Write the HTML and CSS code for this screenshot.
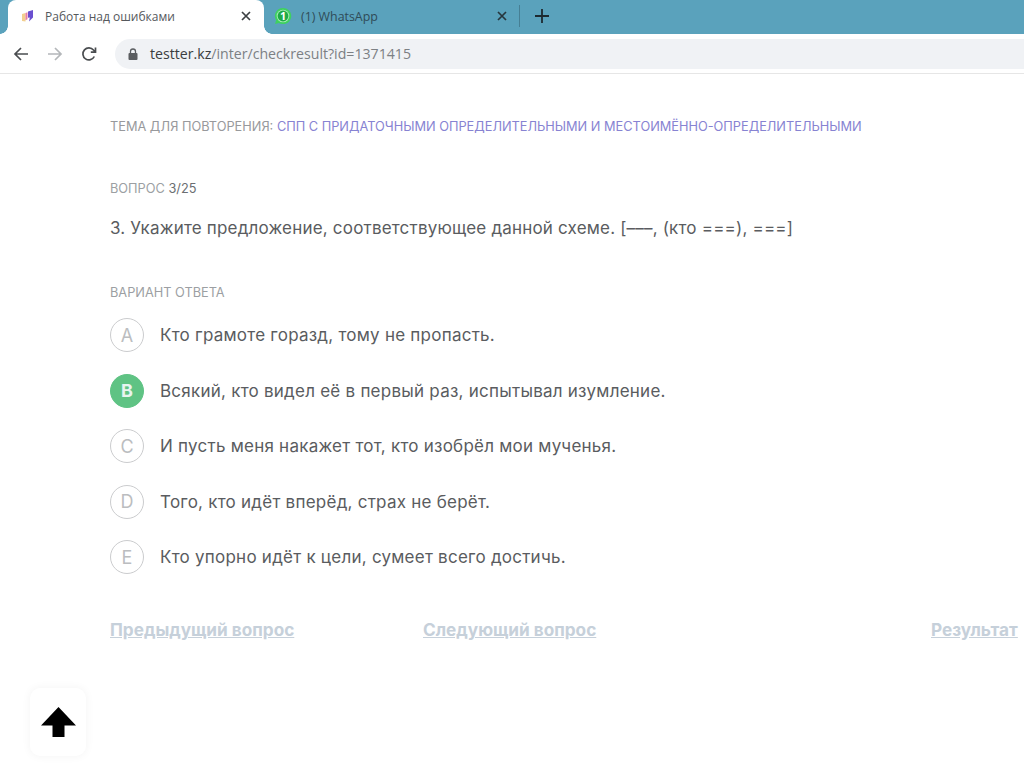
FILE: index.html
```html
<!DOCTYPE html>
<html lang="ru">
<head>
<meta charset="utf-8">
<title>Работа над ошибками</title>
<link rel="stylesheet" href="styles.css">
</head>
<body>
<div class="tabbar">
  <div class="tab active">
    <svg class="favicon" viewBox="0 0 14 14" width="14" height="14"><path d="M1 5l3.500-1v8.500L1 12z" fill="#f2cf8f"/><path d="M4.500 4l2-.8v7l-2 1z" fill="#e77fa6"/><path d="M7 2.500L12 1v7.500L8 12.500l.8-4-1.800.2z" fill="#6a4fd0"/></svg>
    <span class="tab-title">Работа над ошибками</span>
    <svg class="tab-close" viewBox="0 0 10 10" width="10" height="10"><path d="M1 1l8 8M9 1l-8 8" stroke="#3c4043" stroke-width="1.700" fill="none"/></svg>
  </div>
  <div class="tab inactive">
    <svg class="favicon-wa" viewBox="0 0 20 20" width="18" height="18"><path d="M10 1a9 9 0 0 0-7.700 13.600L1.200 18.800l4.300-1.100A9 9 0 1 0 10 1z" fill="#3fd15f"/><circle cx="10" cy="10" r="7" fill="#a8ecb8"/><circle cx="10" cy="10" r="6" fill="#1faa48"/><text x="10" y="14" class="wa-num">1</text></svg>
    <span class="tab-title">(1) WhatsApp</span>
    <svg class="tab-close" viewBox="0 0 10 10" width="10" height="10"><path d="M1 1l8 8M9 1l-8 8" stroke="#26363d" stroke-width="1.700" fill="none"/></svg>
  </div>
  <span class="tab-sep"></span>
  <svg class="new-tab" viewBox="0 0 14 14" width="14" height="14"><path d="M7 0v14M0 7h14" stroke="#1d2a30" stroke-width="1.800" fill="none"/></svg>
</div>
<div class="toolbar">
  <svg class="nav" viewBox="0 0 16 16" width="16" height="16"><path d="M15 8H2M8 2L2 8l6 6" stroke="#4a4d50" stroke-width="1.700" fill="none"/></svg>
  <svg class="nav" viewBox="0 0 16 16" width="16" height="16"><path d="M1 8h13M8 2l6 6-6 6" stroke="#b4b7ba" stroke-width="1.700" fill="none"/></svg>
  <svg class="nav" viewBox="0 0 16 16" width="16" height="16"><path d="M13.300 10.500A6 6 0 1 1 12.500 4L14.500 6M14.500 1.500V6.200H9.800" stroke="#4a4d50" stroke-width="1.700" fill="none"/></svg>
  <div class="omnibox">
    <svg class="lock" viewBox="0 0 10 12" width="10" height="12"><path d="M2.500 5V3.500a2.500 2.500 0 0 1 5 0V5" stroke="#5a5d60" stroke-width="1.300" fill="none"/><rect x="0.500" y="5" width="9" height="7" rx="1" fill="#5a5d60"/></svg>
    <span class="url"><span class="url-host">testter.kz</span>/inter/checkresult?id=1371415</span>
  </div>
</div>
<main class="page">
  <p class="topic">ТЕМА ДЛЯ ПОВТОРЕНИЯ: <a class="topic-link">СПП С ПРИДАТОЧНЫМИ ОПРЕДЕЛИТЕЛЬНЫМИ И МЕСТОИМЁННО-ОПРЕДЕЛИТЕЛЬНЫМИ</a></p>
  <p class="counter">ВОПРОС <span class="counter-num">3/25</span></p>
  <h1 class="question">3. Укажите предложение, соответствующее данной схеме. [–––, (кто ===), ===]</h1>
  <p class="answers-label">ВАРИАНТ ОТВЕТА</p>
  <ul class="answers">
    <li class="answer"><span class="mark">A</span><span>Кто грамоте горазд, тому не пропасть.</span></li>
    <li class="answer"><span class="mark correct">B</span><span>Всякий, кто видел её в первый раз, испытывал изумление.</span></li>
    <li class="answer"><span class="mark">C</span><span>И пусть меня накажет тот, кто изобрёл мои мученья.</span></li>
    <li class="answer"><span class="mark">D</span><span>Того, кто идёт вперёд, страх не берёт.</span></li>
    <li class="answer"><span class="mark">E</span><span>Кто упорно идёт к цели, сумеет всего достичь.</span></li>
  </ul>
  <nav class="pager">
    <a class="pager-link prev">Предыдущий вопрос</a>
    <a class="pager-link next">Следующий вопрос</a>
    <a class="pager-link result">Результат</a>
  </nav>
</main>
<button class="to-top" aria-label="Наверх">
  <svg viewBox="0 0 35 30" width="35" height="30"><path d="M17.500 0L35 18.500H23.500V30H11.500V18.500H0z" fill="#000"/></svg>
</button>
</body>
</html>
```
FILE: styles.css
```css
* { box-sizing: border-box; }
html, body { margin: 0; padding: 0; }
body {
  width: 1024px;
  height: 767px;
  overflow: hidden;
  background: #fff;
  position: relative;
  font-family: Inter, "Liberation Sans", sans-serif;
  color: #55585c;
}
.tabbar {
  height: 34px;
  background: #5aa2bc;
  display: flex;
  align-items: center;
  padding-left: 8px;
}
.tab {
  height: 34px;
  display: flex;
  align-items: center;
  font-family: "Open Sans", sans-serif;
  font-size: 12px;
  padding-bottom: 2px;
}
.tab.active {
  position: relative;
  width: 256px;
  background: #fff;
  border-radius: 8px 8px 0 0;
  padding-left: 13px;
  padding-right: 13px;
  color: #55585c;
}
.tab.active::before,
.tab.active::after {
  content: "";
  position: absolute;
  bottom: 0;
  width: 8px;
  height: 8px;
}
.tab.active::before {
  left: -8px;
  background: radial-gradient(circle at 0 0, #5aa2bc 7.500px, #fff 8px);
}
.tab.active::after {
  right: -8px;
  background: radial-gradient(circle at 100% 0, #5aa2bc 7.500px, #fff 8px);
}
.tab.inactive {
  width: 255px;
  padding-left: 10px;
  padding-right: 12px;
  color: #2f4b57;
}
.favicon { margin-right: 10px; flex: none; }
.favicon-wa { margin-right: 9px; flex: none; }
.inactive .tab-title { font-size: 12.400px; }
.wa-num { font-size: 12px; font-weight: 700; fill: #fff; text-anchor: middle; font-family: "Open Sans", sans-serif; }
.tab-title { flex: 1; white-space: nowrap; }
.tab-close { flex: none; }
.tab-sep { width: 1px; height: 22px; background: #467f94; flex: none; margin-bottom: 2px; }
.new-tab { margin-left: 15px; margin-bottom: 2px; flex: none; }
.toolbar {
  height: 40px;
  background: #fff;
  border-bottom: 1px solid #e6e6e6;
  display: flex;
  align-items: center;
  padding-left: 13px;
  gap: 18px;
}
.omnibox {
  flex: 1;
  height: 30px;
  background: #f0f2f5;
  border-radius: 15px 0 0 15px;
  display: flex;
  align-items: center;
  padding-left: 13px;
  gap: 12px;
}
.url { font-family: "Open Sans", sans-serif; font-size: 14.150px; color: #7c8084; }
.url-host { color: #3a3d40; }
.page { padding: 45px 0 0 110px; }
.topic { margin: 0; font-size: 12.770px; line-height: 16px; color: #98999c; white-space: nowrap; }
.topic-link { color: #8783d2; }
.counter { margin: 46px 0 0; font-size: 12.770px; line-height: 16px; color: #9c9fa3; }
.counter-num { color: #6b6e72; }
.question { margin: 20px 0 0; font-size: 17px; line-height: 22px; font-weight: 400; color: #5a5c60; white-space: nowrap; letter-spacing: 0.190px; }
.answers-label { margin: 46px 0 0; font-size: 12.770px; line-height: 16px; color: #9c9fa3; }
.answers { list-style: none; margin: 17px 0 0; padding: 0; display: flex; flex-direction: column; gap: 21.500px; }
.answer { display: flex; align-items: center; gap: 16px; font-size: 17px; letter-spacing: 0.240px; color: #5a5c60; height: 34px; white-space: nowrap; }
.mark {
  width: 34px; height: 34px; border-radius: 50%;
  border: 1px solid #cbccce;
  display: flex; align-items: center; justify-content: center;
  color: #bbbdc0; font-size: 18px; letter-spacing: 0; flex: none;
}
.mark.correct { background: #5fc384; border-color: #5fc384; color: #e8f4f0; font-weight: 700; }
.pager { display: flex; margin-top: 45px; font-size: 17.200px; font-weight: 700; white-space: nowrap; }
.pager-link { color: #c6d0da; text-decoration: underline; }
.prev { width: 313px; }
.next { width: 508px; }
.to-top {
  position: absolute; left: 30px; top: 688px;
  width: 56px; height: 68px;
  background: #fff; border: 0; border-radius: 10px;
  box-shadow: 0 0 10px rgba(0,0,0,.05);
  display: flex; align-items: center; justify-content: center; padding: 0;
}
```
